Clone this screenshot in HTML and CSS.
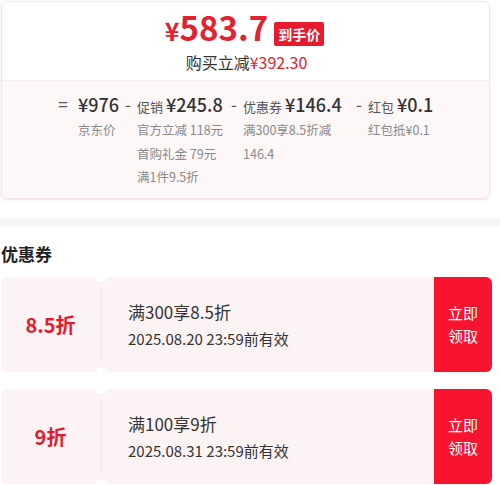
FILE: index.html
```html
<!DOCTYPE html>
<html lang="zh">
<head>
<meta charset="utf-8">
<link rel="stylesheet" href="styles.css">
</head>
<body>
<div class="page">
  <div class="card">
    <div class="card-top">
      <div class="final">
        <span class="yen">¥</span><span class="amount">583.7</span><span class="badge">到手价</span>
      </div>
      <div class="saving">购买立减<span class="red">¥392.30</span></div>
    </div>
    <div class="card-bottom">
      <div class="calc">
        <div class="op">=</div>
        <div class="col col1">
          <div class="head"><span class="price">¥976</span></div>
          <div class="sub">京东价</div>
        </div>
        <div class="op">-</div>
        <div class="col col2">
          <div class="head"><span class="label">促销</span><span class="price">¥245.8</span></div>
          <div class="sub">官方立减 118元</div>
          <div class="sub">首购礼金 79元</div>
          <div class="sub">满1件9.5折</div>
        </div>
        <div class="op">-</div>
        <div class="col col3">
          <div class="head"><span class="label">优惠券</span><span class="price">¥146.4</span></div>
          <div class="sub">满300享8.5折减146.4</div>
        </div>
        <div class="op">-</div>
        <div class="col col4">
          <div class="head"><span class="label">红包</span><span class="price">¥0.1</span></div>
          <div class="sub">红包抵¥0.1</div>
        </div>
      </div>
    </div>
  </div>
  <div class="band"></div>
  <div class="section-title">优惠券</div>
  <div class="coupon">
    <div class="c-left">8.5折</div>
    <div class="c-div"></div>
    <div class="c-mid">
      <div class="c-cond">满300享8.5折</div>
      <div class="c-date">2025.08.20 23:59前有效</div>
    </div>
    <div class="c-btn">立即<br>领取</div>
  </div>
  <div class="coupon">
    <div class="c-left">9折</div>
    <div class="c-div"></div>
    <div class="c-mid">
      <div class="c-cond">满100享9折</div>
      <div class="c-date">2025.08.31 23:59前有效</div>
    </div>
    <div class="c-btn">立即<br>领取</div>
  </div>
</div>
</body>
</html>
```
FILE: styles.css
```css
html, body {
  margin: 0;
  padding: 0;
  background: #fff;
}
body {
  font-family: "Noto Sans CJK SC", "Noto Sans", sans-serif;
  color: #333;
  overflow: hidden;
  height: 485px;
}
.page {
  width: 500px;
}
.card {
  margin: 1px 0 0 1px;
  width: 487px;
  height: 196px;
  border: 1px solid #f5e4e6;
  border-radius: 6px;
  overflow: hidden;
  box-shadow: 0 1px 2px rgba(230, 200, 205, 0.5);
  display: flex;
  flex-direction: column;
}
.card-top {
  height: 78px;
  background: #fff;
  border-bottom: 1px solid #f8eeee;
  display: flex;
  flex-direction: column;
  align-items: center;
}
.final {
  display: flex;
  align-items: baseline;
  color: #e3212f;
  height: 46px;
  margin-top: 2px;
  margin-left: -2px;
}
.yen {
  font-size: 25px;
  font-weight: 700;
  line-height: 46px;
}
.amount {
  font-size: 33px;
  font-weight: 700;
  line-height: 46px;
}
.badge {
  align-self: flex-start;
  margin-left: 6px;
  margin-top: 18px;
  background: #e81a2d;
  color: #fff;
  font-size: 14px;
  font-weight: 700;
  line-height: 24px;
  height: 24px;
  padding: 0 4px;
  border-radius: 2px;
}
.saving {
  font-size: 16px;
  line-height: 22px;
  color: #333;
  margin-left: 2px;
  margin-top: 1px;
}
.red {
  color: #e3212f;
}
.card-bottom {
  flex: 1;
  background: #fdf7f7;
}
.calc {
  display: flex;
  padding: 10px 0 0 55px;
}
.op {
  font-size: 17px;
  line-height: 26px;
  color: #555;
  width: 12px;
  text-align: center;
}
.col {
  display: flex;
  flex-direction: column;
  margin-left: 3px;
}
.col1 { width: 44px; margin-left: 9px; }
.col2 { width: 91px; }
.col3 { width: 110px; }
.col3 .sub { width: 100px; }
.col4 { width: 80px; }
.head {
  display: flex;
  align-items: baseline;
  height: 26px;
  margin-bottom: 1px;
  white-space: nowrap;
}
.label {
  font-size: 13px;
  color: #555;
  margin-right: 3px;
}
.price {
  font-size: 18px;
  color: #333;
  font-weight: 500;
  line-height: 26px;
}
.sub {
  font-size: 12.5px;
  color: #8a8a8a;
  line-height: 23.5px;
}
.band {
  margin-top: 19px;
  height: 9px;
  background: #f7f7fa;
}
.section-title {
  font-size: 17px;
  font-weight: 700;
  color: #222;
  line-height: 24px;
  margin: 15px 0 0 1px;
  height: 24px;
}
.coupon {
  margin: 11px 0 0 1px;
  width: 491px;
  height: 95px;
  display: flex;
  background: #fdf3f4;
  border-radius: 6px;
}
.coupon + .coupon {
  margin-top: 17px;
}
.c-left {
  width: 99px;
  display: flex;
  align-items: center;
  justify-content: center;
  color: #e31d2f;
  font-size: 20px;
  font-weight: 700;
}
.c-div {
  width: 2px;
  position: relative;
  background: linear-gradient(#fdf3f4, #f9eaec 20%, #f9eaec 80%, #fdf3f4);
}
.c-div::before,
.c-div::after {
  content: "";
  position: absolute;
  left: -4px;
  width: 10px;
  height: 10px;
  border-radius: 50%;
  background: #fff;
}
.c-div::before { top: -5px; }
.c-div::after { bottom: -5px; }
.c-mid {
  flex: 1;
  padding-left: 26px;
  display: flex;
  flex-direction: column;
  justify-content: center;
}
.c-cond {
  font-size: 17px;
  color: #333;
  line-height: 26px;
}
.c-date {
  font-size: 15px;
  color: #333;
  line-height: 25px;
  margin-top: 1px;
}
.c-btn {
  width: 58px;
  background: #f8132e;
  color: #fff;
  font-size: 15px;
  line-height: 23px;
  display: flex;
  align-items: center;
  justify-content: center;
  text-align: center;
  border-radius: 0 6px 6px 0;
  padding-bottom: 2px;
}
```
